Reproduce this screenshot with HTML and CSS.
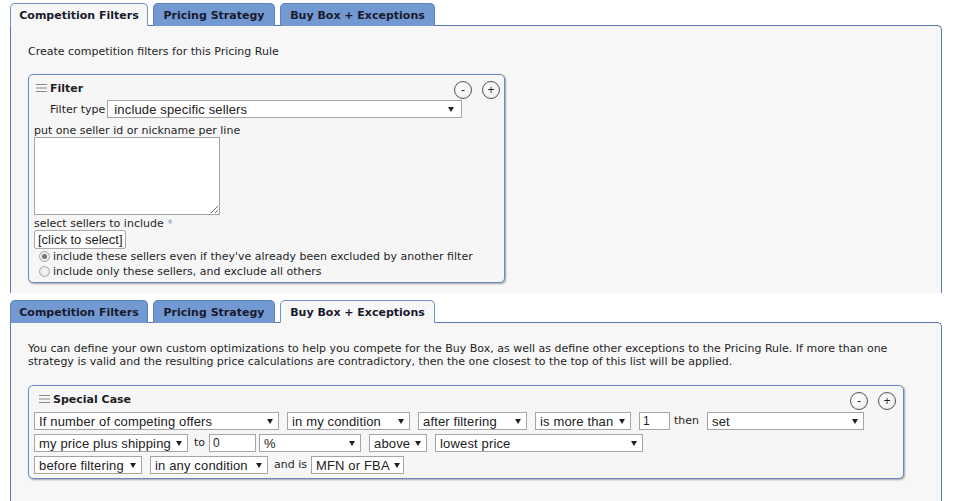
FILE: index.html
```html
<!DOCTYPE html>
<html>
<head>
<meta charset="utf-8">
<link rel="stylesheet" href="styles.css">
</head>
<body>
<div class="page">
  <section class="tabset first">
    <div class="tabs">
      <div class="tab active t1">Competition Filters</div>
      <div class="tab t2">Pricing Strategy</div>
      <div class="tab t3">Buy Box + Exceptions</div>
    </div>
    <div class="panel clipped">
      <p class="intro">Create competition filters for this Pricing Rule</p>
      <div class="box filter">
        <div class="box-head">
          <svg class="grip" width="12" height="10" viewBox="0 0 12 10"><path d="M0 1.5H11M0 5H11M0 8.5H11" stroke="#8a8a8a" stroke-width="1.2"/></svg>
          <span class="title">Filter</span>
          <div class="ctrls"><span class="circ">-</span><span class="circ">+</span></div>
        </div>
        <div class="ftype">
          <span class="lbl-s">Filter type</span>
          <div class="sel w-ftype"><span>include specific sellers</span><i class="arr"></i></div>
        </div>
        <div class="line">put one seller id or nickname per line</div>
        <textarea class="ta"></textarea>
        <div class="line after-ta">select sellers to include <span class="req">*</span></div>
        <div class="pick">[click to select]</div>
        <div class="radio-row"><span class="radio on"></span>include these sellers even if they've already been excluded by another filter</div>
        <div class="radio-row"><span class="radio"></span>include only these sellers, and exclude all others</div>
      </div>
    </div>
  </section>

  <section class="tabset second">
    <div class="tabs">
      <div class="tab t1">Competition Filters</div>
      <div class="tab t2">Pricing Strategy</div>
      <div class="tab active t3">Buy Box + Exceptions</div>
    </div>
    <div class="panel">
      <p class="intro two">You can define your own custom optimizations to help you compete for the Buy Box, as well as define other exceptions to the Pricing Rule. If more than one<br>strategy is valid and the resulting price calculations are contradictory, then the one closest to the top of this list will be applied.</p>
      <div class="box special">
        <div class="box-head">
          <svg class="grip" width="12" height="10" viewBox="0 0 12 10"><path d="M0 1.5H11M0 5H11M0 8.5H11" stroke="#8a8a8a" stroke-width="1.2"/></svg>
          <span class="title">Special Case</span>
          <div class="ctrls"><span class="circ">-</span><span class="circ">+</span></div>
        </div>
        <div class="row">
          <div class="sel w245"><span>If number of competing offers</span><i class="arr"></i></div>
          <div class="sel w123"><span>in my condition</span><i class="arr"></i></div>
          <div class="sel w109"><span>after filtering</span><i class="arr"></i></div>
          <div class="sel w96"><span>is more than</span><i class="arr"></i></div>
          <div class="inp w31 m4">1</div>
          <span class="lbl m8">then</span>
          <div class="sel w157"><span>set</span><i class="arr"></i></div>
        </div>
        <div class="row">
          <div class="sel w154 m6"><span>my price plus shipping</span><i class="arr"></i></div>
          <span class="lbl m4">to</span>
          <div class="inp w47 m3">0</div>
          <div class="sel w102"><span>%</span><i class="arr"></i></div>
          <div class="sel w58"><span>above</span><i class="arr"></i></div>
          <div class="sel w208"><span>lowest price</span><i class="arr"></i></div>
        </div>
        <div class="row">
          <div class="sel w108"><span>before filtering</span><i class="arr"></i></div>
          <div class="sel w118 m6"><span>in any condition</span><i class="arr"></i></div>
          <span class="lbl m4">and is</span>
          <div class="sel w93"><span>MFN or FBA</span><i class="arr"></i></div>
        </div>
      </div>
    </div>
  </section>
</div>
</body>
</html>
```
FILE: styles.css
```css
* { box-sizing: border-box; }
html, body { margin: 0; padding: 0; background: #fff; }
body {
  font-family: "DejaVu Sans", Verdana, sans-serif;
  font-size: 11px;
  color: #1e1e1e;
}
.page { padding: 3px 0 0 10px; width: 942px; }
.tabset.second { margin-top: 7px; }

.tabs { display: flex; gap: 5px; margin-bottom: -1px; position: relative; z-index: 1; }
.tab {
  height: 23px;
  border: 1px solid #5d7ebf;
  border-bottom: none;
  border-radius: 5px 5px 0 0;
  background: #7299d1;
  font-weight: bold;
  font-size: 11px;
  color: #1a1a2e;
  display: flex;
  align-items: center;
  justify-content: center;
  padding-top: 1px;
}
.tab.active {
  background: #f7f7f7;
  border-color: #7391c9;
  height: 23px;
  border-bottom: 1px solid #f7f7f7;
}
.tab.t1 { width: 138px; }
.tab.t2 { width: 122px; }
.tab.t3 { width: 155px; }

.panel {
  width: 932px;
  border: 1px solid #5a78b8;
  border-radius: 0 5px 0 0;
  background: #f7f7f7;
  padding: 19px 0 0 17px;
}
.panel.clipped { height: 268px; border-bottom: none; overflow: hidden; }
.second .panel { height: 179px; border-bottom: none; }

.intro { margin: 0 0 16px; line-height: 13px; }
.intro.two { margin-bottom: 17px; }

.box {
  border: 1px solid #6686c4;
  border-radius: 5px;
  background: #f6f6f6;
  box-shadow: 1px 1px 2px rgba(0,0,0,0.35);
  padding: 5px 4px 4px 5px;
}
.box.filter { width: 477px; height: 209px; }
.box.special { width: 876px; height: 94px; padding-right: 7px; }

.box-head { display: flex; align-items: center; height: 16px; }
.grip { margin: 0 2px 0 2px; }
.special .grip { margin: 0 2px 0 5px; }
.title { font-weight: bold; font-size: 11px; }
.ctrls { margin-left: auto; display: flex; gap: 10px; margin-top: 4px; }
.circ {
  width: 18px; height: 18px;
  border: 1px solid #555;
  border-radius: 50%;
  background: radial-gradient(circle at 40% 35%, #ffffff 0%, #f3f3f3 60%, #e0e0e0 100%);
  display: flex; align-items: center; justify-content: center;
  font-size: 12px; line-height: 1; color: #222;
  font-family: "Liberation Sans", Arial, sans-serif;
}
.special .box-head { height: 16px; margin-bottom: 5px; }
.special .ctrls { margin-top: 3px; }

.ftype { display: flex; align-items: center; margin: 4px 0 0 16px; height: 18px; }
.lbl-s { margin-right: 2px; }
.line { line-height: 13px; margin-top: 4px; }
.ftype + .line { margin-top: 6px; }
.line.after-ta { margin-top: 2px; }

.sel {
  height: 18px;
  border: 1px solid #a5a5a5;
  background: #fff;
  display: flex; align-items: center;
  padding: 0 5px 0 4px;
  font-family: "Liberation Sans", Arial, sans-serif;
  font-size: 13px;
  letter-spacing: 0.15px;
  color: #222;
  margin-right: 8px;
  white-space: nowrap;
  flex: none;
  overflow: hidden;
}
.sel span { flex: none; margin-right: 4px; }
.arr {
  margin-left: auto;
  width: 0; height: 0;
  border-left: 3px solid transparent;
  border-right: 3px solid transparent;
  border-top: 5px solid #222;
  box-sizing: content-box;
  padding: 0;
  flex: none;
}
.w-ftype { width: 355px; margin-right: 0; padding-left: 6px; padding-right: 7px; }

.ta {
  display: block;
  width: 186px; height: 78px;
  border: 1px solid #a5a5a5;
  background: #fff;
  margin: 0;
  resize: both;
}
.req { color: #8fa0b8; }
.pick {
  display: inline-block;
  height: 19px;
  width: 92px;
  border: 1px solid #aaa;
  border-radius: 2px;
  background: #fff;
  font-family: "Liberation Sans", Arial, sans-serif;
  font-size: 13px;
  line-height: 17px;
  padding-left: 3px;
  margin-top: 0;
}
.radio-row { display: flex; align-items: center; height: 15px; padding-left: 5px; }
.radio {
  width: 11px; height: 11px;
  border: 1px solid #a8a8a8;
  border-radius: 50%;
  background: radial-gradient(circle, #f7f7f7 0%, #e2e2e2 100%);
  margin-right: 3px;
  position: relative;
  flex: none;
}
.radio.on::after {
  content: "";
  position: absolute;
  left: 2px; top: 2px;
  width: 5px; height: 5px;
  border-radius: 50%;
  background: #777;
}

.row { display: flex; align-items: center; height: 18px; margin-bottom: 4px; }
.inp {
  height: 18px;
  border: 1px solid #a5a5a5;
  background: #fff;
  font-family: "Liberation Sans", Arial, sans-serif;
  font-size: 12px;
  line-height: 16px;
  padding-left: 3px;
  flex: none;
}
.lbl { font-size: 11px; margin-top: -1px; flex: none; }
.m3 { margin-right: 3px; }
.m4 { margin-right: 4px; }
.m6 { margin-right: 6px; }
.m8 { margin-right: 8px; }

.w245 { width: 245px; }
.w123 { width: 123px; }
.w109 { width: 109px; }
.w96 { width: 96px; }
.w31 { width: 31px; }
.w157 { width: 157px; }
.w154 { width: 154px; }
.w47 { width: 47px; }
.w102 { width: 102px; }
.w58 { width: 58px; }
.w208 { width: 208px; }
.w108 { width: 108px; }
.w118 { width: 118px; }
.w93 { width: 93px; }
```
